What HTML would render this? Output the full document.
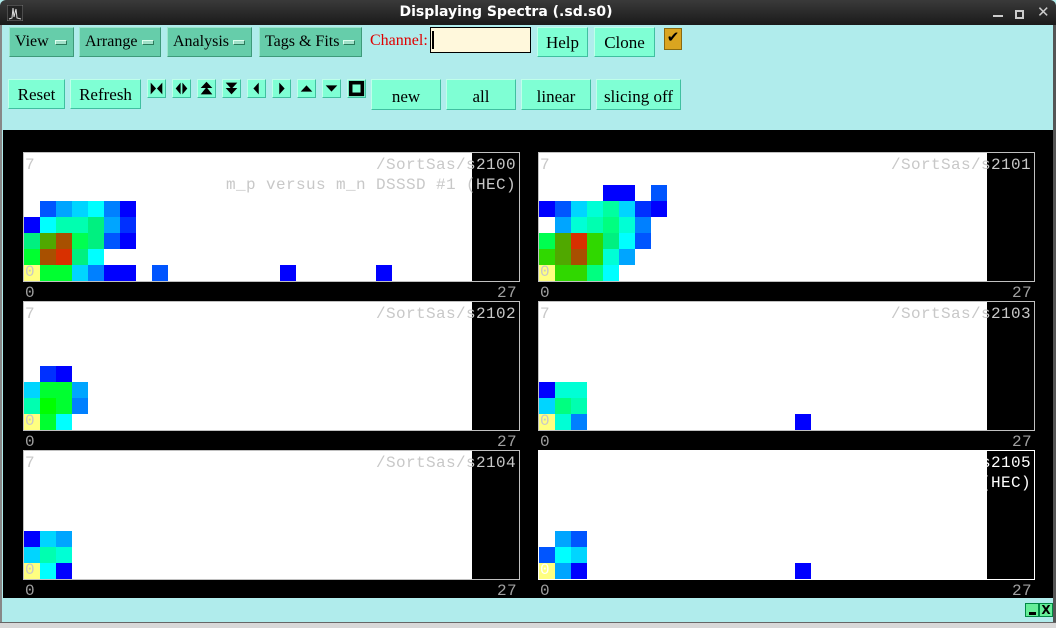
<!DOCTYPE html>
<html><head><meta charset="utf-8"><style>
*{margin:0;padding:0;box-sizing:border-box}
body{width:1056px;height:628px;overflow:hidden;background:#b0ecec;position:relative;font-family:"Liberation Serif",serif}
.a{position:absolute}
#tb{left:0;top:0;width:1056px;height:25px;background:linear-gradient(#3a3a3a,#1a1a1a);border-radius:6px 6px 0 0}
#tt{left:0;width:1012px;top:4px;text-align:center;color:#fff;font:bold 14px "DejaVu Sans",sans-serif}
.m{background:#66cdaa;border:1px solid;border-color:#9ee6cc #3e9a7a #3e9a7a #9ee6cc;height:30px;top:27px;font-size:16px;padding:5px 0 0 5px;color:#000}
.m i{position:absolute;right:6px;top:12px;width:12px;height:5px;background:#a0e0c8;border:1px solid;border-color:#e0fff0 #2a7a5a #2a7a5a #e0fff0}
.b{background:#7fffd4;border:1px solid;border-color:#bfffea #40c0a0 #40c0a0 #bfffea;font-size:16px;text-align:center;color:#000}
.ic{top:79px;width:19px;height:19px}
.p{background:#000;border:1px solid #c0c0c0;width:497px;height:130px}
.w{left:0;top:0;width:448px;height:128px;background:#fff}
.p div.c{position:absolute;width:16px;height:16px}
.t{font:16px "Liberation Mono",monospace;letter-spacing:0.4px;color:#c8c8c8;white-space:pre}
.ax{font:16px "Liberation Mono",monospace;letter-spacing:0.4px;color:#a0a0a0}
</style></head><body>
<div class="a" id="tb"></div>
<svg class="a" style="left:7px;top:5px" width="16" height="16"><rect width="16" height="16" fill="#222" stroke="#777"/><path d="M2 14 L5 13 L6 3 L7 12 L9 4 L10 13 L14 14" stroke="#ddd" fill="none"/></svg>
<div class="a" id="tt">Displaying Spectra (.sd.s0)</div>
<div class="a" style="left:993px;top:15px;width:10px;height:2px;background:#ccc"></div>
<div class="a" style="left:1015px;top:10px;width:9px;height:9px;border:2px solid #ccc"></div>
<div class="a" style="left:1037px;top:3px;color:#ccc;font:bold 15px 'DejaVu Sans',sans-serif">✕</div>
<div class="a" style="left:1053px;top:25px;width:3px;height:603px;background:#555"></div>
<div class="a" style="left:0;top:25px;width:2px;height:603px;background:#888"></div>
<div class="a" style="left:0;top:622px;width:1056px;height:6px;background:#d8d8d8;border-top:1px solid #666"></div>

<div class="a m" style="left:9px;width:65px">View<i></i></div>
<div class="a m" style="left:79px;width:82px">Arrange<i></i></div>
<div class="a m" style="left:167px;width:85px">Analysis<i></i></div>
<div class="a m" style="left:259px;width:103px">Tags &amp; Fits<i></i></div>
<div class="a" style="left:370px;top:32px;color:#e00000;font-size:16px">Channel:</div>
<div class="a" style="left:430px;top:27px;width:101px;height:26px;background:#fff8dc;border:1px solid #000"><div class="a" style="left:1px;top:3px;width:2px;height:18px;background:#000"></div></div>
<div class="a b" style="left:537px;top:27px;width:51px;height:30px;padding-top:5px;font-size:17px">Help</div>
<div class="a b" style="left:594px;top:27px;width:61px;height:30px;padding-top:5px;font-size:17px">Clone</div>
<div class="a" style="left:664px;top:28px;width:18px;height:22px;background:#daa520;border:1px solid #8a6a10;font-size:15px;line-height:18px;text-align:center">✔</div>

<div class="a b" style="left:8px;top:79px;width:57px;height:30px;padding-top:5px;font-size:17px">Reset</div>
<div class="a b" style="left:70px;top:79px;width:71px;height:30px;padding-top:5px;font-size:17px">Refresh</div>
<svg class="a b ic" style="left:147px" viewBox="0 0 19 19"><path d="M3 3L9 9.5L3 16ZM16 3L10 9.5L16 16Z"/></svg>
<svg class="a b ic" style="left:172px" viewBox="0 0 19 19"><path d="M8.5 3L3 9.5L8.5 16ZM10.5 3L16 9.5L10.5 16Z"/></svg>
<svg class="a b ic" style="left:197px" viewBox="0 0 19 19"><path d="M9.5 2L16 9H3ZM9.5 8L16 16H3Z"/></svg>
<svg class="a b ic" style="left:222px" viewBox="0 0 19 19"><path d="M3 3H16L9.5 10ZM3 9H16L9.5 16Z"/></svg>
<svg class="a b ic" style="left:247px" viewBox="0 0 19 19"><path d="M12 3V16L6 9.5Z"/></svg>
<svg class="a b ic" style="left:272px" viewBox="0 0 19 19"><path d="M7 3V16L13 9.5Z"/></svg>
<svg class="a b ic" style="left:297px" viewBox="0 0 19 19"><path d="M3 13H16L9.5 6Z"/></svg>
<svg class="a b ic" style="left:322px" viewBox="0 0 19 19"><path d="M3 6H16L9.5 13Z"/></svg>
<svg class="a b ic" style="left:347px" viewBox="0 0 19 19"><rect x="1" y="1" width="17" height="17" fill="#000"/><rect x="5" y="5" width="9" height="9" fill="#7fffd4"/></svg>
<div class="a b" style="left:371px;top:79px;width:70px;height:31px;padding-top:7px;font-size:17px">new</div>
<div class="a b" style="left:446px;top:79px;width:70px;height:31px;padding-top:7px;font-size:17px">all</div>
<div class="a b" style="left:521px;top:79px;width:70px;height:31px;padding-top:7px;font-size:17px">linear</div>
<div class="a b" style="left:596px;top:79px;width:85px;height:31px;padding-top:7px;font-size:17px">slicing off</div>

<div class="a" style="left:3px;top:130px;width:1050px;height:468px;background:#000"></div>

<!-- panel 1 -->
<div class="a p" style="left:23px;top:152px"><div class="a w"></div>
<div class="c" style="left:16px;top:48px;background:#0055ff"></div><div class="c" style="left:32px;top:48px;background:#00a5ff"></div><div class="c" style="left:48px;top:48px;background:#00d5ff"></div><div class="c" style="left:64px;top:48px;background:#00ffff"></div><div class="c" style="left:80px;top:48px;background:#0080ff"></div><div class="c" style="left:96px;top:48px;background:#0000ff"></div>
<div class="c" style="left:0;top:64px;background:#0000ff"></div><div class="c" style="left:16px;top:64px;background:#00ffff"></div><div class="c" style="left:32px;top:64px;background:#00ffb0"></div><div class="c" style="left:48px;top:64px;background:#00ffb0"></div><div class="c" style="left:64px;top:64px;background:#00f080"></div><div class="c" style="left:80px;top:64px;background:#00a5ff"></div><div class="c" style="left:96px;top:64px;background:#0030ff"></div>
<div class="c" style="left:0;top:80px;background:#00f080"></div><div class="c" style="left:16px;top:80px;background:#50a800"></div><div class="c" style="left:32px;top:80px;background:#a85000"></div><div class="c" style="left:48px;top:80px;background:#00ff50"></div><div class="c" style="left:64px;top:80px;background:#00f080"></div><div class="c" style="left:80px;top:80px;background:#0055ff"></div><div class="c" style="left:96px;top:80px;background:#0000ff"></div>
<div class="c" style="left:0;top:96px;background:#00ff30"></div><div class="c" style="left:16px;top:96px;background:#a85000"></div><div class="c" style="left:32px;top:96px;background:#d83000"></div><div class="c" style="left:48px;top:96px;background:#00f080"></div><div class="c" style="left:64px;top:96px;background:#00ffff"></div>
<div class="c" style="left:0;top:112px;background:#ffff80"></div><div class="c" style="left:16px;top:112px;background:#00ff30"></div><div class="c" style="left:32px;top:112px;background:#00ff30"></div><div class="c" style="left:48px;top:112px;background:#00d5ff"></div><div class="c" style="left:64px;top:112px;background:#0080ff"></div><div class="c" style="left:80px;top:112px;background:#0000ff"></div><div class="c" style="left:96px;top:112px;background:#0000ff"></div><div class="c" style="left:128px;top:112px;background:#0055ff"></div><div class="c" style="left:256px;top:112px;background:#0000ff"></div><div class="c" style="left:352px;top:112px;background:#0000ff"></div>
<div class="a t" style="left:1px;top:3px">7</div><div class="a t" style="left:1px;top:110px">0</div>
<div class="a t" style="right:3px;top:3px">/SortSas/s2100</div><div class="a t" style="right:3px;top:23px">m_p versus m_n DSSSD #1 (HEC)</div>
</div>
<div class="a ax" style="left:25px;top:284px">0</div><div class="a ax" style="left:497px;top:284px">27</div>

<!-- panel 2 -->
<div class="a p" style="left:538px;top:152px"><div class="a w"></div>
<div class="c" style="left:64px;top:32px;background:#0000ff"></div><div class="c" style="left:80px;top:32px;background:#0000ff"></div><div class="c" style="left:112px;top:32px;background:#0055ff"></div>
<div class="c" style="left:0;top:48px;background:#0000ff"></div><div class="c" style="left:16px;top:48px;background:#0055ff"></div><div class="c" style="left:32px;top:48px;background:#00d5ff"></div><div class="c" style="left:48px;top:48px;background:#00ffd5"></div><div class="c" style="left:64px;top:48px;background:#00ffa0"></div><div class="c" style="left:80px;top:48px;background:#00d5ff"></div><div class="c" style="left:96px;top:48px;background:#0030ff"></div><div class="c" style="left:112px;top:48px;background:#0000ff"></div>
<div class="c" style="left:16px;top:64px;background:#00a5ff"></div><div class="c" style="left:32px;top:64px;background:#00ffd5"></div><div class="c" style="left:48px;top:64px;background:#00ffb0"></div><div class="c" style="left:64px;top:64px;background:#00ff80"></div><div class="c" style="left:80px;top:64px;background:#00ffd5"></div><div class="c" style="left:96px;top:64px;background:#0080ff"></div>
<div class="c" style="left:0;top:80px;background:#00ff50"></div><div class="c" style="left:16px;top:80px;background:#50a800"></div><div class="c" style="left:32px;top:80px;background:#d83000"></div><div class="c" style="left:48px;top:80px;background:#30d800"></div><div class="c" style="left:64px;top:80px;background:#00f080"></div><div class="c" style="left:80px;top:80px;background:#00ffff"></div><div class="c" style="left:96px;top:80px;background:#0055ff"></div>
<div class="c" style="left:0;top:96px;background:#30d800"></div><div class="c" style="left:16px;top:96px;background:#50a800"></div><div class="c" style="left:32px;top:96px;background:#a85000"></div><div class="c" style="left:48px;top:96px;background:#30d800"></div><div class="c" style="left:64px;top:96px;background:#00ffd5"></div><div class="c" style="left:80px;top:96px;background:#00a5ff"></div>
<div class="c" style="left:0;top:112px;background:#ffff80"></div><div class="c" style="left:16px;top:112px;background:#30d800"></div><div class="c" style="left:32px;top:112px;background:#30d800"></div><div class="c" style="left:48px;top:112px;background:#00ff80"></div><div class="c" style="left:64px;top:112px;background:#00ffff"></div>
<div class="a t" style="left:1px;top:3px">7</div><div class="a t" style="left:1px;top:110px">0</div>
<div class="a t" style="right:3px;top:3px">/SortSas/s2101</div>
</div>
<div class="a ax" style="left:540px;top:284px">0</div><div class="a ax" style="left:1012px;top:284px">27</div>

<!-- panel 3 -->
<div class="a p" style="left:23px;top:301px"><div class="a w"></div>
<div class="c" style="left:16px;top:64px;background:#0030ff"></div><div class="c" style="left:32px;top:64px;background:#0000ff"></div>
<div class="c" style="left:0;top:80px;background:#00d5ff"></div><div class="c" style="left:16px;top:80px;background:#00ff30"></div><div class="c" style="left:32px;top:80px;background:#00ff30"></div><div class="c" style="left:48px;top:80px;background:#00a5ff"></div>
<div class="c" style="left:0;top:96px;background:#00ffb0"></div><div class="c" style="left:16px;top:96px;background:#00ff00"></div><div class="c" style="left:32px;top:96px;background:#00ff30"></div><div class="c" style="left:48px;top:96px;background:#0080ff"></div>
<div class="c" style="left:0;top:112px;background:#ffff80"></div><div class="c" style="left:16px;top:112px;background:#00ff30"></div><div class="c" style="left:32px;top:112px;background:#00ffff"></div>
<div class="a t" style="left:1px;top:3px">7</div><div class="a t" style="left:1px;top:110px">0</div>
<div class="a t" style="right:3px;top:3px">/SortSas/s2102</div>
</div>
<div class="a ax" style="left:25px;top:433px">0</div><div class="a ax" style="left:497px;top:433px">27</div>

<!-- panel 4 -->
<div class="a p" style="left:538px;top:301px"><div class="a w"></div>
<div class="c" style="left:0;top:80px;background:#0000ff"></div><div class="c" style="left:16px;top:80px;background:#00ffd5"></div><div class="c" style="left:32px;top:80px;background:#00ffd5"></div>
<div class="c" style="left:0;top:96px;background:#00d5ff"></div><div class="c" style="left:16px;top:96px;background:#00ff80"></div><div class="c" style="left:32px;top:96px;background:#00ffb0"></div>
<div class="c" style="left:0;top:112px;background:#ffff80"></div><div class="c" style="left:16px;top:112px;background:#00ffd5"></div><div class="c" style="left:32px;top:112px;background:#0080ff"></div><div class="c" style="left:256px;top:112px;background:#0000ff"></div>
<div class="a t" style="left:1px;top:3px">7</div><div class="a t" style="left:1px;top:110px">0</div>
<div class="a t" style="right:3px;top:3px">/SortSas/s2103</div>
</div>
<div class="a ax" style="left:540px;top:433px">0</div><div class="a ax" style="left:1012px;top:433px">27</div>

<!-- panel 5 -->
<div class="a p" style="left:23px;top:450px"><div class="a w"></div>
<div class="c" style="left:0;top:80px;background:#0000ff"></div><div class="c" style="left:16px;top:80px;background:#00d5ff"></div><div class="c" style="left:32px;top:80px;background:#00a5ff"></div>
<div class="c" style="left:0;top:96px;background:#00d5ff"></div><div class="c" style="left:16px;top:96px;background:#00ffb0"></div><div class="c" style="left:32px;top:96px;background:#00ffd5"></div>
<div class="c" style="left:0;top:112px;background:#ffff80"></div><div class="c" style="left:16px;top:112px;background:#00ffff"></div><div class="c" style="left:32px;top:112px;background:#0000ff"></div>
<div class="a t" style="left:1px;top:3px">7</div><div class="a t" style="left:1px;top:110px">0</div>
<div class="a t" style="right:3px;top:3px">/SortSas/s2104</div>
</div>
<div class="a ax" style="left:25px;top:582px">0</div><div class="a ax" style="left:497px;top:582px">27</div>

<!-- panel 6 -->
<div class="a p" style="left:538px;top:450px;border-color:#fff"><div class="a w"></div>
<div class="c" style="left:16px;top:80px;background:#00a5ff"></div><div class="c" style="left:32px;top:80px;background:#0055ff"></div>
<div class="c" style="left:0;top:96px;background:#0055ff"></div><div class="c" style="left:16px;top:96px;background:#00ffff"></div><div class="c" style="left:32px;top:96px;background:#00d5ff"></div>
<div class="c" style="left:0;top:112px;background:#ffff80"></div><div class="c" style="left:16px;top:112px;background:#00a5ff"></div><div class="c" style="left:32px;top:112px;background:#0000ff"></div><div class="c" style="left:256px;top:112px;background:#0000ff"></div>
<div class="a t" style="left:1px;top:110px;color:#fff">0</div>
<div class="a t" style="right:3px;top:3px;color:#fff">/SortSas/s2105</div><div class="a t" style="right:3px;top:23px;color:#fff">m_p versus m_n DSSSD #2 (HEC)</div>
</div>
<div class="a ax" style="left:540px;top:582px">0</div><div class="a ax" style="left:1012px;top:582px">27</div>
<div class="a" style="left:3px;top:598px;width:1050px;height:24px;background:#b0ecec"></div>
<div class="a" style="left:1025px;top:603px;width:14px;height:14px;background:#66ee99;border:1px solid #084"><div class="a" style="left:3px;top:8px;width:7px;height:3px;background:#000"></div></div>
<div class="a" style="left:1039px;top:603px;width:14px;height:14px;background:#66ee99;border:1px solid #084;font:bold 12px 'DejaVu Sans',sans-serif;line-height:12px;text-align:center">X</div>
</body></html>
